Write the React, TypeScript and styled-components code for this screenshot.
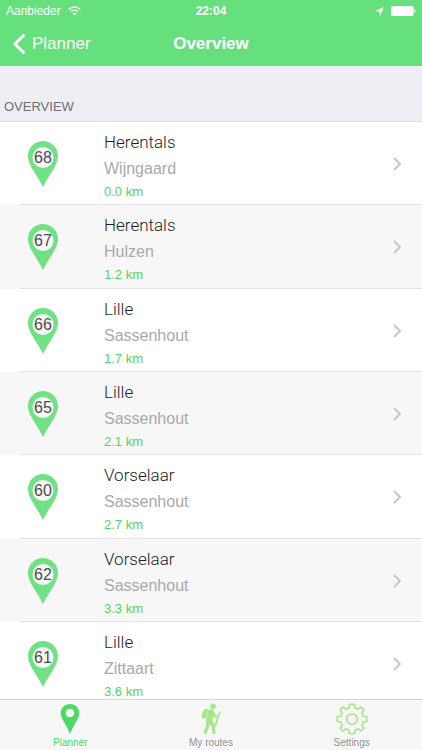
import React from "react";
import styled, { createGlobalStyle } from "styled-components";

const GlobalStyle = createGlobalStyle`
  *, *::before, *::after { box-sizing: border-box; }
  html, body, #root { height: 100%; }
  body {
    margin: 0;
    font-family: "Liberation Sans", Arial, sans-serif;
    background: #fff;
    color: #1c1c1c;
  }
`;

const Screen = styled.div`
  display: flex;
  flex-direction: column;
  height: 100%;
  overflow: hidden;
`;

const Header = styled.header`
  flex: none;
  background: #66df7d;
  color: #fff;
`;

const StatusBar = styled.div`
  display: grid;
  grid-template-columns: 1fr auto 1fr;
  align-items: center;
  height: 22px;
  padding: 0 6px;
  font-size: 12px;
  line-height: 14px;
`;

const StatusSide = styled.div<{ $end?: boolean }>`
  display: flex;
  align-items: center;
  gap: 7px;
  justify-content: ${(p) => (p.$end ? "flex-end" : "flex-start")};
`;

const Clock = styled.time`
  font-weight: 700;
`;

const NavBar = styled.nav`
  display: grid;
  grid-template-columns: 1fr auto 1fr;
  align-items: center;
  height: 44px;
  padding: 0 12px;
`;

const BackButton = styled.button`
  display: flex;
  align-items: center;
  gap: 6px;
  justify-self: start;
  padding: 0;
  border: 0;
  background: none;
  color: inherit;
  font: inherit;
  font-size: 17px;
  line-height: 20px;
  cursor: pointer;
`;

const Title = styled.h1`
  margin: 0;
  font-size: 17px;
  line-height: 20px;
  font-weight: 700;
`;

const Content = styled.main`
  flex: 1;
  min-height: 0;
  overflow-y: auto;
  scrollbar-width: none;
`;

const SectionHeader = styled.h2`
  display: flex;
  align-items: flex-end;
  height: 56px;
  margin: 0;
  padding: 0 4px 6px;
  border-bottom: 1px solid #dedde2;
  background: #efeef4;
  color: #6d6d72;
  font-size: 13px;
  line-height: 16px;
  font-weight: 400;
`;

const StopList = styled.ul`
  margin: 0;
  padding: 0;
  list-style: none;
`;

const StopItem = styled.li`
  height: 83px;
  background: linear-gradient(#e2e2e4, #e2e2e4) 20px 100% / 100% 1px no-repeat #fff;

  &:nth-child(even) { background-color: #f7f7f7; }
  &:nth-child(3n + 2) { height: 84px; }
`;

const StopLink = styled.a`
  display: grid;
  grid-template-columns: 76px 1fr auto;
  height: 100%;
  padding: 0 20px 0 28px;
  color: inherit;
  text-decoration: none;
`;

const Marker = styled.span`
  display: grid;
  width: 30px;
  height: 46px;
  margin-top: 19px;

  & > * { grid-area: 1 / 1; }
`;

const MarkerNumber = styled.span`
  align-self: start;
  padding-top: 8px;
  color: #4c4c4c;
  font-size: 16px;
  line-height: 18px;
  text-align: center;
`;

const StopText = styled.span`
  display: flex;
  flex-direction: column;
  padding-top: 8px;
`;

const Town = styled.span`
  font-family: Roboto, "Liberation Sans", sans-serif;
  font-size: 17px;
  line-height: 24px;
  font-weight: 300;
`;

const Place = styled.span`
  color: #a9a9a9;
  font-size: 16px;
  line-height: 30px;
`;

const Distance = styled.span`
  color: #4bd763;
  font-size: 13px;
  line-height: 16px;
`;

const Disclosure = styled.svg`
  align-self: center;
`;

const TabBar = styled.nav`
  display: grid;
  grid-template-columns: repeat(3, 1fr);
  flex: none;
  height: 51px;
  border-top: 1px solid #d5d5d7;
  background: #f7f7f8;
`;

const Tab = styled.button<{ $active?: boolean }>`
  display: flex;
  flex-direction: column;
  align-items: center;
  gap: 1px;
  padding: 3px 0 0;
  border: 0;
  background: none;
  color: ${(p) => (p.$active ? "#4cd964" : "#929292")};
  font: inherit;
  font-size: 10px;
  line-height: 14px;
  cursor: pointer;
`;

const stops = [
  { id: 68, town: "Herentals", place: "Wijngaard", km: "0.0" },
  { id: 67, town: "Herentals", place: "Hulzen", km: "1.2" },
  { id: 66, town: "Lille", place: "Sassenhout", km: "1.7" },
  { id: 65, town: "Lille", place: "Sassenhout", km: "2.1" },
  { id: 60, town: "Vorselaar", place: "Sassenhout", km: "2.7" },
  { id: 62, town: "Vorselaar", place: "Sassenhout", km: "3.3" },
  { id: 61, town: "Lille", place: "Zittaart", km: "3.6" },
];

const WifiIcon = () => (
  <svg width="13" height="10" viewBox="0 0 13 10" fill="none" stroke="#fff" strokeWidth="1.5" aria-hidden="true">
    <path d="M0.7 3.5C4 0.2 9 0.2 12.3 3.5" />
    <path d="M2.8 5.7C4.9 3.7 8.1 3.7 10.2 5.7" />
    <path d="M6.5 9.4L4.5 7.4C5.7 6.4 7.3 6.4 8.5 7.4Z" fill="#fff" stroke="none" />
  </svg>
);

const LocationIcon = () => (
  <svg width="9" height="9" viewBox="0 0 9 9" fill="#fff" aria-hidden="true">
    <path d="M9 0L0 4.2L4.5 4.5L5 9Z" />
  </svg>
);

const BatteryIcon = () => (
  <svg width="25" height="10" viewBox="0 0 25 10" fill="#fff" aria-hidden="true">
    <rect width="22.5" height="10" rx="1.5" />
    <path d="M23.3 3.2C24.9 3.4 24.9 6.6 23.3 6.8Z" />
  </svg>
);

const BackIcon = () => (
  <svg width="14" height="22" viewBox="0 0 14 22" fill="none" stroke="#fff" strokeWidth="3" aria-hidden="true">
    <path d="M12.5 1.5L3 11L12.5 20.5" />
  </svg>
);

const MarkerIcon = () => (
  <svg width="30" height="46" viewBox="0 0 30 46" aria-hidden="true">
    <path
      d="M15 0C6.7 0 0 6.7 0 15C0 19.4 1.8 23.4 4 27.3C7.4 33.3 11.7 39 15 46C18.3 39 22.6 33.3 26 27.3C28.2 23.4 30 19.4 30 15C30 6.7 23.3 0 15 0Z"
      fill="#70e285"
    />
    <circle cx="15" cy="16.5" r="10.5" fill="#f7f7f7" />
  </svg>
);

const PinIcon = () => (
  <svg width="20" height="32" viewBox="0 0 20 32" aria-hidden="true">
    <path
      fillRule="evenodd"
      fill="#4cd964"
      d="M10 1C4.7 1 0.7 5 0.7 10C0.7 13.3 2.4 16.4 4.3 19.6C6.5 23.3 8.3 27 10 31C11.7 27 13.5 23.3 15.7 19.6C17.6 16.4 19.3 13.3 19.3 10C19.3 5 15.3 1 10 1ZM10 5.7A4.3 4.3 0 1 1 10 14.3A4.3 4.3 0 1 1 10 5.7Z"
    />
  </svg>
);

const HikerIcon = () => (
  <svg width="22" height="32" viewBox="0 0 22 32" fill="#a5e78a" aria-hidden="true">
    <circle cx="13" cy="3.2" r="2.8" />
    <path d="M6.8 5.8C3.8 5.8 2 9.4 1.9 13.4C1.9 15 2.6 15.8 3.8 15.7L5.8 15.5L8 7C7.8 6.2 7.4 5.8 6.8 5.8Z" />
    <path d="M10.2 6.2C12.4 5.9 13.7 7 14.2 9L15.2 11.6L18 12.8C19.3 13.4 18.8 15.4 17.4 15L13.8 13.8L13 12.8L12.6 18L14.6 21.4L15.6 29.4C15.8 31.6 12.9 31.9 12.5 29.9L11.6 23.4L9.3 20.8L8.9 24.4L6.6 30.2C5.9 32 3.2 31.1 3.7 29.1L5.8 23.4L6.3 16.5L7.7 8.8C8 7.2 8.8 6.4 10.2 6.2Z" />
    <path d="M19.6 9.4L15.4 22.4" fill="none" stroke="#a5e78a" strokeWidth="1.7" strokeLinecap="round" />
  </svg>
);

const GearIcon = () => (
  <svg width="32" height="32" viewBox="0 0 32 32" fill="none" stroke="#a5e78a" strokeWidth="1.6" strokeLinejoin="round" aria-hidden="true">
    <path d="M13.6 1.2H18.4L19 4.9C20.2 5.2 21.2 5.7 22.2 6.2L25.2 4L28 6.8L25.8 9.8C26.4 10.8 26.8 11.8 27.1 13L30.8 13.6V18.4L27.1 19C26.8 20.2 26.4 21.2 25.8 22.2L28 25.2L25.2 28L22.2 25.8C21.2 26.4 20.2 26.8 19 27.1L18.4 30.8H13.6L13 27.1C11.8 26.8 10.8 26.4 9.8 25.8L6.8 28L4 25.2L6.2 22.2C5.6 21.2 5.2 20.2 4.9 19L1.2 18.4V13.6L4.9 13C5.2 11.8 5.6 10.8 6.2 9.8L4 6.8L6.8 4L9.8 6.2C10.8 5.6 11.8 5.2 13 4.9Z" />
    <circle cx="16" cy="16" r="5.2" />
  </svg>
);

export default function App() {
  return (
    <Screen>
      <GlobalStyle />
      <Header>
        <StatusBar>
          <StatusSide>
            <span>Aanbieder</span>
            <WifiIcon />
          </StatusSide>
          <Clock>22:04</Clock>
          <StatusSide $end>
            <LocationIcon />
            <BatteryIcon />
          </StatusSide>
        </StatusBar>
        <NavBar>
          <BackButton type="button">
            <BackIcon />
            Planner
          </BackButton>
          <Title>Overview</Title>
        </NavBar>
      </Header>

      <Content>
        <SectionHeader>OVERVIEW</SectionHeader>
        <StopList>
          {stops.map((stop) => (
            <StopItem key={stop.id}>
              <StopLink href={`#stop-${stop.id}`}>
                <Marker>
                  <MarkerIcon />
                  <MarkerNumber>{stop.id}</MarkerNumber>
                </Marker>
                <StopText>
                  <Town>{stop.town}</Town>
                  <Place>{stop.place}</Place>
                  <Distance>{stop.km} km</Distance>
                </StopText>
                <Disclosure width="10" height="14" viewBox="0 0 10 14" fill="none" stroke="#c7c7cc" strokeWidth="2" aria-hidden="true">
                  <path d="M2 1L8 7L2 13" />
                </Disclosure>
              </StopLink>
            </StopItem>
          ))}
        </StopList>
      </Content>

      <TabBar>
        <Tab type="button" $active aria-current="page">
          <PinIcon />
          Planner
        </Tab>
        <Tab type="button">
          <HikerIcon />
          My routes
        </Tab>
        <Tab type="button">
          <GearIcon />
          Settings
        </Tab>
      </TabBar>
    </Screen>
  );
}
